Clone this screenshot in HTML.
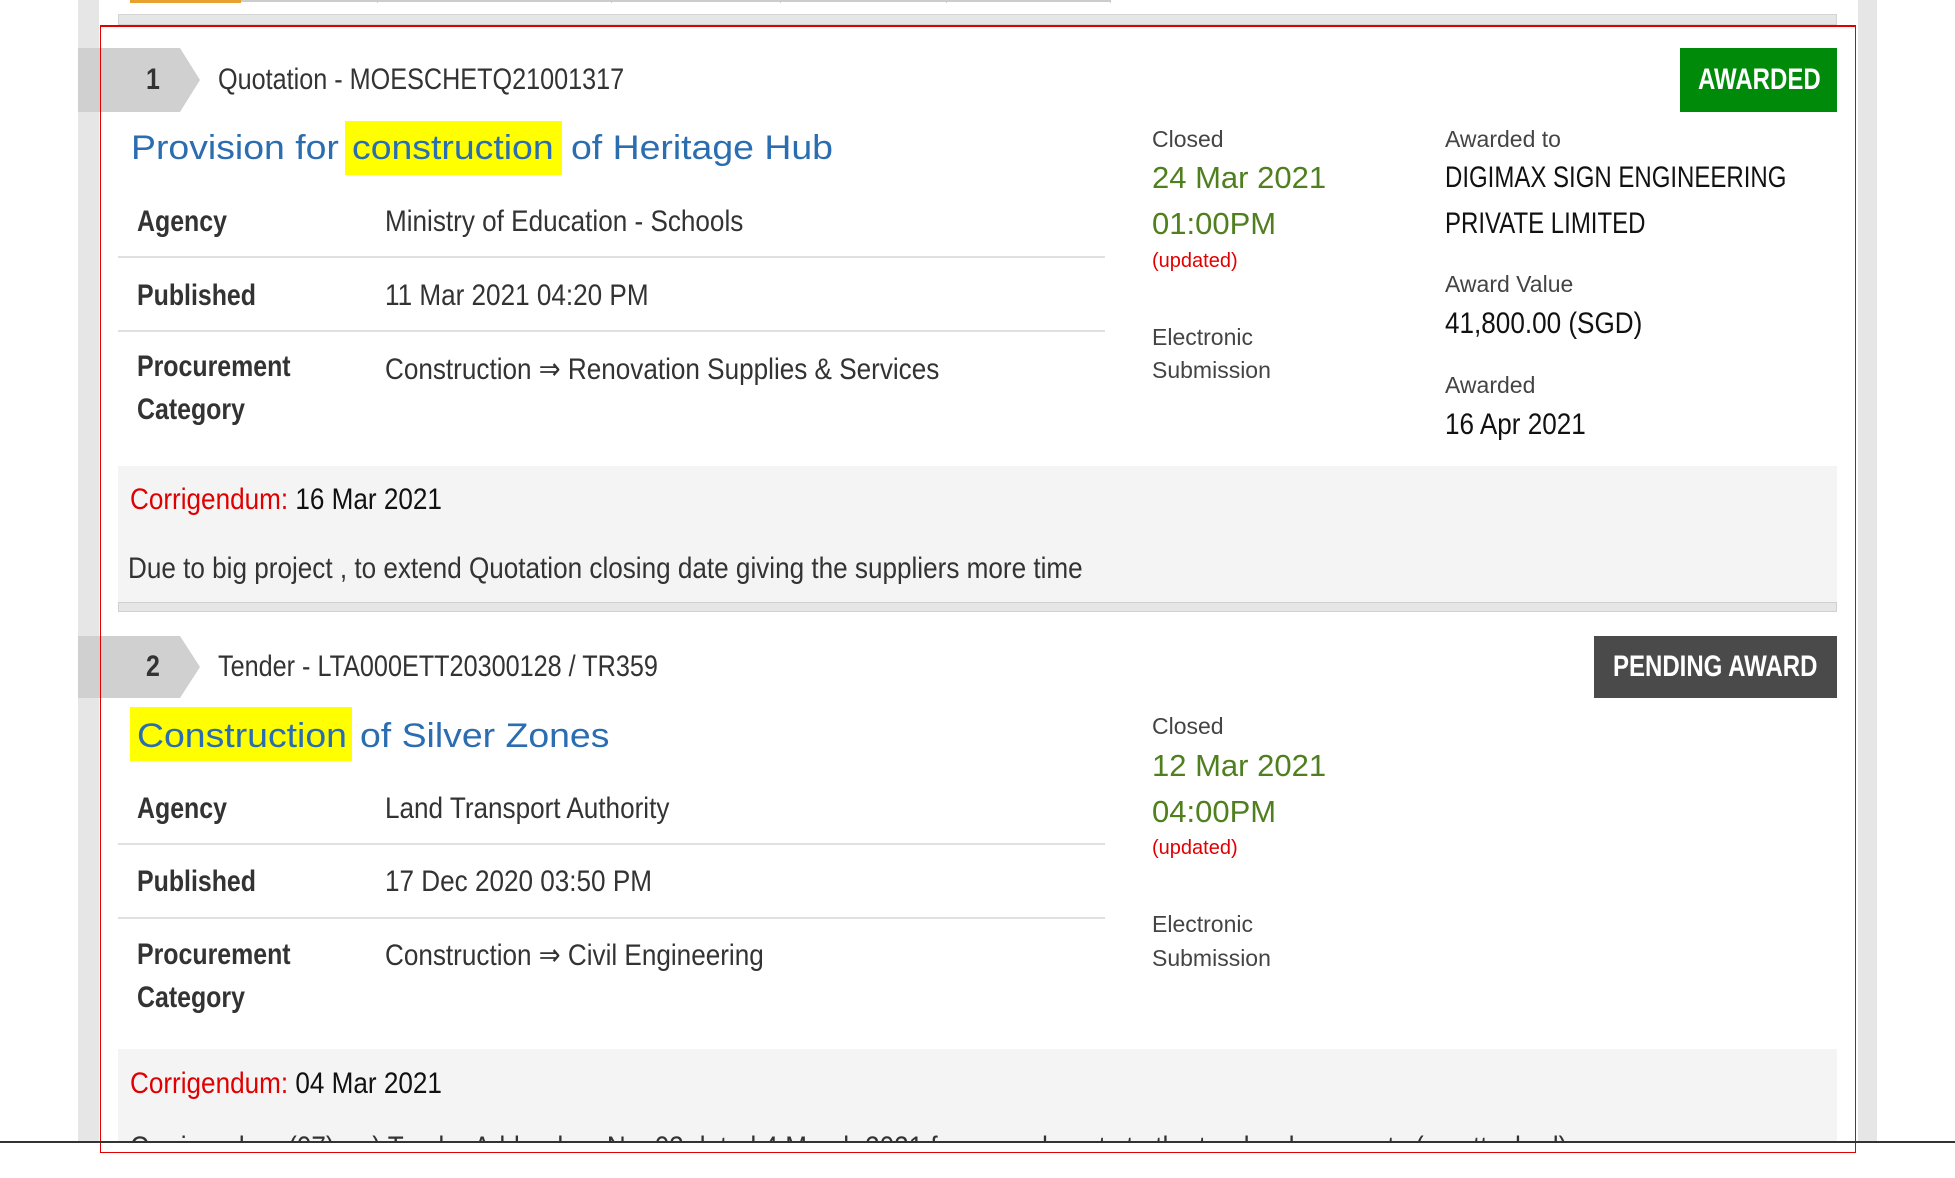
<!DOCTYPE html>
<html><head><meta charset="utf-8"><style>
*{margin:0;padding:0;box-sizing:border-box}
body{width:1955px;height:1178px;background:#fff;position:relative;overflow:hidden;font-family:"Liberation Sans",sans-serif;color:#333}
.a{position:absolute;white-space:nowrap}
.n{transform:scaleX(.87);transform-origin:left center;font-size:30px;line-height:40px;height:40px}
.b{font-weight:bold;transform:scaleX(.83)}
.up{transform:scaleX(.8)}
.s{font-size:23px;line-height:30px;color:#444}
.g{font-size:31px;line-height:40px;color:#4f7f1f}
.u{font-size:20px;line-height:26px;color:#e00000}
.t{font-size:34px;line-height:44px;color:#2a6db0;transform:scaleX(1.1);transform-origin:left center}
.line{position:absolute;left:118px;width:987px;height:2px;background:#e0e0e0}
.badge{position:absolute;left:78px;width:122px;height:64px;background:#d0d0d0;clip-path:polygon(0 0,102px 0,122px 50%,102px 100%,0 100%)}
</style></head><body>
<div class="a" style="left:78px;top:0;width:21px;height:1142px;background:#e6e6e6"></div>
<div class="a" style="left:1858px;top:0;width:19px;height:1142px;background:#e6e6e6"></div>
<div class="a" style="left:99px;top:0;width:1759px;height:1142px;background:#fff"></div>
<div class="a" style="left:130px;top:0;width:111px;height:3px;background:#e8a030"></div>
<div class="a" style="left:241px;top:0;width:870px;height:2px;background:#ccc"></div>
<div class="a" style="left:377px;top:0;width:1px;height:3px;background:#ccc"></div>
<div class="a" style="left:611px;top:0;width:1px;height:3px;background:#ccc"></div>
<div class="a" style="left:780px;top:0;width:1px;height:3px;background:#ccc"></div>
<div class="a" style="left:946px;top:0;width:1px;height:3px;background:#ccc"></div>
<div class="a" style="left:1110px;top:0;width:1px;height:3px;background:#ccc"></div>
<div class="a" style="left:118px;top:14px;width:1719px;height:11px;background:#e6e6e6;border:1px solid #d4d4d4"></div>

<!-- ITEM 1 -->
<div class="badge" style="top:48px"></div>
<div class="a n b" style="left:146px;top:60px">1</div>
<div class="a n" style="left:218px;top:60px;transform:scaleX(.84)">Quotation - MOESCHETQ21001317</div>
<div class="a" style="left:1680px;top:48px;width:157px;height:64px;background:#008a0a"></div>
<div class="a n b" style="left:1698px;top:60px;color:#fff;transform:scaleX(.8)">AWARDED</div>

<div class="a" style="left:345px;top:121px;width:217px;height:54px;background:#ffff00"></div>
<div class="a t" style="left:131px;top:126px">Provision for</div>
<div class="a t" style="left:352px;top:126px">construction</div>
<div class="a t" style="left:571px;top:126px">of Heritage Hub</div>

<div class="a n b" style="left:137px;top:202px">Agency</div>
<div class="a n" style="left:385px;top:202px">Ministry of Education - Schools</div>
<div class="line" style="top:256px"></div>
<div class="a n b" style="left:137px;top:276px">Published</div>
<div class="a n" style="left:385px;top:276px">11 Mar 2021 04:20 PM</div>
<div class="line" style="top:330px"></div>
<div class="a n b" style="left:137px;top:347px">Procurement</div>
<div class="a n b" style="left:137px;top:390px">Category</div>
<div class="a n" style="left:385px;top:350px">Construction ⇒ Renovation Supplies &amp; Services</div>

<div class="a s" style="left:1152px;top:124px">Closed</div>
<div class="a g" style="left:1152px;top:158px">24 Mar 2021</div>
<div class="a g" style="left:1152px;top:204px">01:00PM</div>
<div class="a u" style="left:1152px;top:248px">(updated)</div>
<div class="a s" style="left:1152px;top:322px">Electronic</div>
<div class="a s" style="left:1152px;top:355px">Submission</div>

<div class="a s" style="left:1445px;top:124px">Awarded to</div>
<div class="a n up" style="left:1445px;top:158px;color:#111">DIGIMAX SIGN ENGINEERING</div>
<div class="a n up" style="left:1445px;top:204px;color:#111">PRIVATE LIMITED</div>
<div class="a s" style="left:1445px;top:269px">Award Value</div>
<div class="a n" style="left:1445px;top:304px;color:#111">41,800.00 (SGD)</div>
<div class="a s" style="left:1445px;top:370px">Awarded</div>
<div class="a n" style="left:1445px;top:405px;color:#111">16 Apr 2021</div>

<div class="a" style="left:118px;top:466px;width:1719px;height:136px;background:#f4f4f4"></div>
<div class="a n" style="left:130px;top:480px;color:#111"><span style="color:#e00000">Corrigendum:</span> 16 Mar 2021</div>
<div class="a n" style="left:128px;top:549px">Due to big project , to extend Quotation closing date giving the suppliers more time</div>
<div class="a" style="left:118px;top:602px;width:1719px;height:10px;background:#e6e6e6;border:1px solid #d0d0d0"></div>

<!-- ITEM 2 -->
<div class="badge" style="top:636px;height:62px"></div>
<div class="a n b" style="left:146px;top:647px">2</div>
<div class="a n" style="left:218px;top:647px;transform:scaleX(.84)">Tender - LTA000ETT20300128 / TR359</div>
<div class="a" style="left:1594px;top:636px;width:243px;height:62px;background:#4a4a4a"></div>
<div class="a n b" style="left:1613px;top:647px;color:#fff;transform:scaleX(.8)">PENDING AWARD</div>

<div class="a" style="left:130px;top:707px;width:222px;height:54px;background:#ffff00"></div>
<div class="a t" style="left:137px;top:714px">Construction</div>
<div class="a t" style="left:360px;top:714px">of Silver Zones</div>

<div class="a n b" style="left:137px;top:789px">Agency</div>
<div class="a n" style="left:385px;top:789px">Land Transport Authority</div>
<div class="line" style="top:843px"></div>
<div class="a n b" style="left:137px;top:862px">Published</div>
<div class="a n" style="left:385px;top:862px">17 Dec 2020 03:50 PM</div>
<div class="line" style="top:917px"></div>
<div class="a n b" style="left:137px;top:935px">Procurement</div>
<div class="a n b" style="left:137px;top:978px">Category</div>
<div class="a n" style="left:385px;top:936px">Construction ⇒ Civil Engineering</div>

<div class="a s" style="left:1152px;top:711px">Closed</div>
<div class="a g" style="left:1152px;top:746px">12 Mar 2021</div>
<div class="a g" style="left:1152px;top:792px">04:00PM</div>
<div class="a u" style="left:1152px;top:835px">(updated)</div>
<div class="a s" style="left:1152px;top:909px">Electronic</div>
<div class="a s" style="left:1152px;top:943px">Submission</div>

<div class="a" style="left:118px;top:1049px;width:1719px;height:93px;background:#f4f4f4"></div>
<div class="a n" style="left:130px;top:1064px;color:#111"><span style="color:#e00000">Corrigendum:</span> 04 Mar 2021</div>
<div class="a n" style="left:130px;top:1128px;height:14px;overflow:hidden">Corrigendum (07) - a) Tender Addendum No. 03 dated 4 March 2021 for amendments to the tender documents (as attached)</div>

<div class="a" style="left:100px;top:25px;width:1756px;height:1128px;border:1px solid #e00000;border-top-width:2px"></div>
<div class="a" style="left:0;top:1141px;width:1955px;height:2px;background:#333"></div>
<div class="a" style="left:0;top:1143px;width:1955px;height:35px;background:#fff"></div>
<div class="a" style="left:100px;top:1143px;width:1756px;height:10px;border:1px solid #e00000;border-top:none"></div>
</body></html>
